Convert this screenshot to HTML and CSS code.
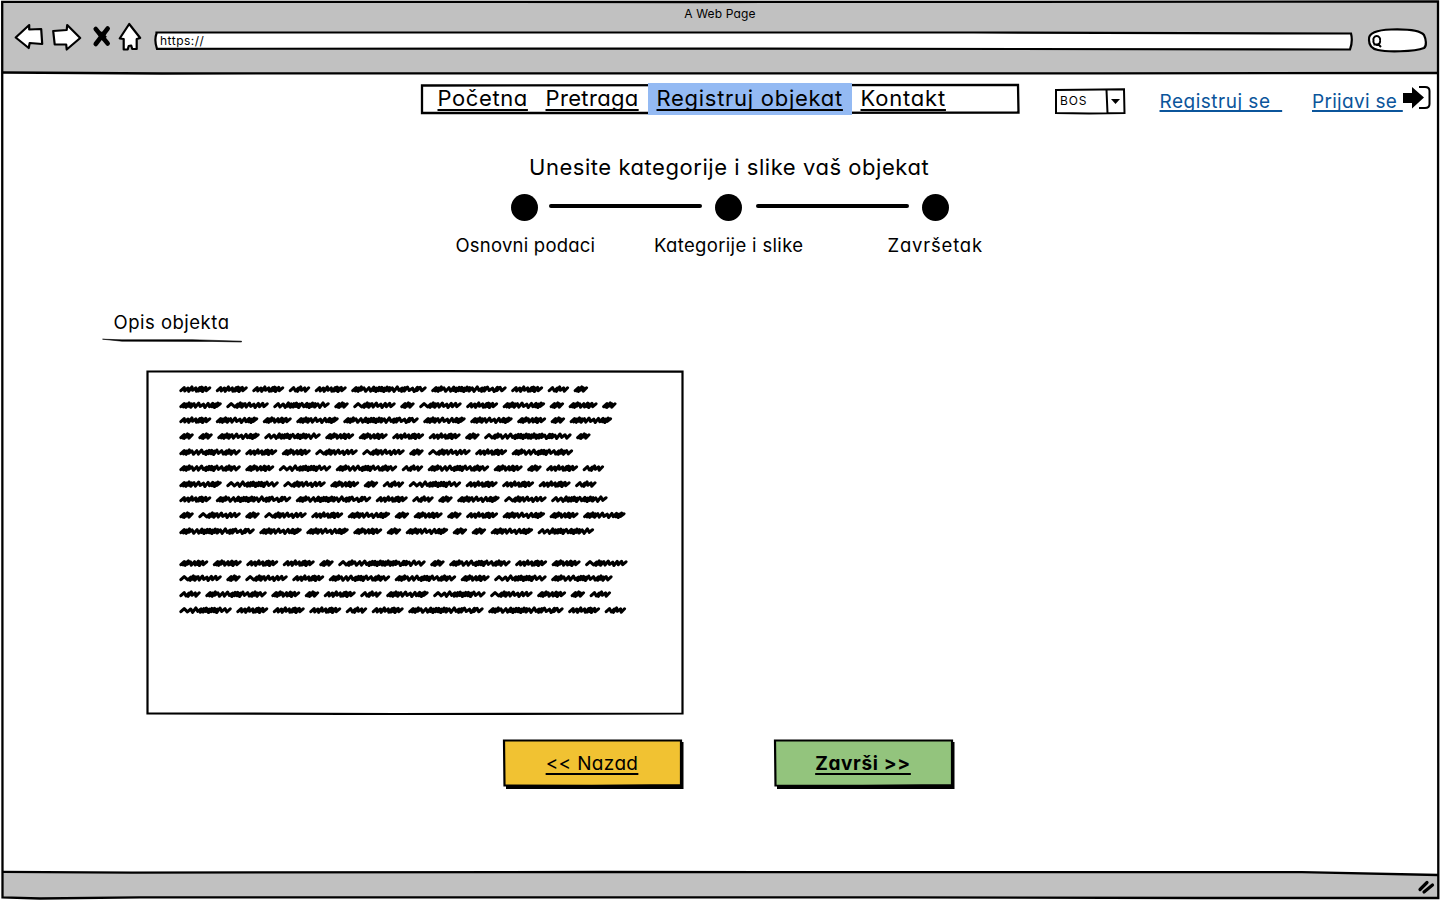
FILE: index.html
```html
<!DOCTYPE html>
<html lang="bs">
<head>
<meta charset="utf-8">
<title>A Web Page</title>
<link rel="stylesheet" href="styles.css">
</head>
<body>
<div class="window">
  <header class="chrome">
    <div class="window-title">A Web Page</div>
    <div class="toolbar">
      <svg class="tools" width="140" height="34" viewBox="0.8 0 140 34">
        <g fill="#fff" stroke="#000" stroke-width="2.2" stroke-linejoin="round">
          <path d="M16 4 2.500 16.500 15.500 27 16.500 22 29 23 28 8 16 8.500Z"/>
          <path d="M40 10 53.500 9 54 4 67 17 53.500 28.500 53 23.500 41.500 23.500Z"/>
          <path d="M116 3 127 17 123.500 18 123.500 28 119 28 118 24.500 115.500 25 114.500 28.500 110.500 28.500 110.500 18 106.500 17.500Z"/>
        </g>
        <path d="M82.500 8 94.500 22.500M94.500 7.500 82.500 23" fill="none" stroke="#000" stroke-width="4.500" stroke-linecap="round"/>
        <path d="M86 12 92 17.500M91 12 87 18" fill="none" stroke="#000" stroke-width="5"/>
      </svg>
      <div class="address">
        <svg class="sketch" width="1200" height="22" viewBox="0 0 1200 22"><path d="M2.500 3.500Q0 10 3 18.800L600 18.600 1196 19.500Q1199 11 1197 3.500L820 2.500 2.500 2.500Z" fill="#fff" stroke="#000" stroke-width="2.200"/></svg>
        <span class="url">https://</span>
      </div>
      <svg class="search" width="62" height="28" viewBox="0 0 62 28"><path d="M3 14C2 7 11 4 25 3.500C41 3 54 4 58 9C60 13 61 20 58 22C48 26 20 26 12 24C6 23 3 19 3 14Z" fill="#fff" stroke="#000" stroke-width="2.200"/><path d="M14 14.500A3.400 3.400 0 1 1 7.500 14.500A3.400 3.400 0 1 1 14 14.500M11.500 17.500 15 21M7.500 18.500H12" fill="none" stroke="#000" stroke-width="2"/></svg>
    </div>
  </header>
  <svg class="rule" width="1436" height="4" viewBox="0 0 1436 4"><path d="M0 1.500 160 2.500 500 2.300H1100L1436 2" fill="none" stroke="#000" stroke-width="2.300"/></svg>

  <div class="topbar">
    <nav class="menu">
      <svg class="sketch" width="600" height="32" viewBox="0 0 600 32"><path d="M2 2.500 300 2.200 598 2 598.500 29.500 300 30 2 30Z" fill="#fff" stroke="#000" stroke-width="2.300"/></svg>
      <a class="item home">Početna</a><a class="item find">Pretraga</a><a class="item active">Registruj objekat</a><a class="item contact">Kontakt</a>
    </nav>
    <div class="language">
      <svg class="sketch" width="72" height="28" viewBox="0 0 72 28"><path d="M2 3 70 2.200 70.500 26 35 26.500 2 26ZM52.500 3 53.500 26" fill="#fff" stroke="#000" stroke-width="2"/><path d="M57 12H66L61.500 17Z"/></svg>
      <span class="code">BOS</span>
    </div>
    <a class="link register">Registruj se&nbsp;&nbsp;</a>
    <a class="link login">Prijavi se&nbsp;</a>
    <svg class="enter" width="30" height="26" viewBox="0 0 30 26"><path d="M1 8H10V2L22 12.500 10 23.500V18H1Z"/><path d="M17 2H23Q27.500 2 27.500 6V19Q27.500 23 23 23H17" fill="none" stroke="#000" stroke-width="2"/></svg>
  </div>

  <main class="content">
    <h1 class="heading">Unesite kategorije i slike vaš objekat</h1>
    <div class="progress"><i class="dot"></i><i class="bar"></i><i class="dot"></i><i class="bar second"></i><i class="dot"></i></div>
    <div class="labels"><span class="label one">Osnovni podaci</span><span class="label two">Kategorije i slike</span><span class="label three">Završetak</span></div>
    <div class="tab"><span class="tab-text">Opis objekta</span>
      <svg class="tab-line" width="142" height="6" viewBox="0 0 142 6"><path d="M.5 1.200 20 1.800 90 1.700 139.500 3.200V4L110 3.400 20 3.200Z" stroke="#000" stroke-width=".6"/></svg>
    </div>
    <div class="description">
      <svg class="sketch" width="538" height="346" viewBox="0 0 538 346"><path d="M1.500 2.500 300 2.200 536.500 2.700 536.500 344.500 250 345 1.500 344.500Z" fill="#fff" stroke="#000" stroke-width="2.200"/></svg>
      <div class="lines" id="lines"></div>
    </div>
    <div class="actions">
      <a class="button back"><svg class="sketch" width="184" height="52" viewBox="0 0 184 52"><path d="M4 4H181.500V51H4Z"/><path d="M2 2.500 179 2.500V47L90 47.800 2.500 47.500Z" fill="#f1c232" stroke="#000" stroke-width="2.200"/></svg><span class="button-text">&lt;&lt; Nazad</span></a>
      <a class="button done"><svg class="sketch" width="184" height="52" viewBox="0 0 184 52"><path d="M4 4H181.500V51H4Z"/><path d="M2 2.500 179 2.500V47L90 47.800 2.500 47.500Z" fill="#93c47d" stroke="#000" stroke-width="2.200"/></svg><span class="button-text">Završi &gt;&gt;</span></a>
    </div>
  </main>

  <footer class="status"><svg width="1436" height="29" viewBox="0 0 1436 29"><path d="M0 2.500 130 3.500 1300 3 1436 6V29H0Z" fill="#c1c1c1"/><path d="M0 2.800 130 3.600 600 3 1300 3.200 1436 6" fill="none" stroke="#000" stroke-width="2.300"/><path d="M1418 20.500 1425 13.500M1422 23 1430.500 16" fill="none" stroke="#000" stroke-width="3.200" stroke-linecap="round"/></svg></footer>
  <svg class="frame" width="1440" height="900" viewBox="0 0 1440 900"><path d="M2.200 1.800 700 2 1438 1.500 1438.300 898 1200 898 900 897.300 140 897.300 40 898.500 2.500 897.500Z" fill="none" stroke="#000" stroke-width="2.300"/></svg>
</div>
<script src="scribble.js"></script>
</body>
</html>
```

FILE: styles.css
```css
* { box-sizing: border-box; }
body { margin: 0; background: #fff; color: #000; font-family: Inter, "Open Sans", sans-serif; font-feature-settings: "cv11" 1, "calt" 0; overflow: hidden; }
svg { display: block; flex: none; }
.window { position: relative; width: 1440px; height: 900px; display: flex; flex-direction: column; padding: 2px; }
.frame { position: absolute; left: 0; top: 0; pointer-events: none; }
.sketch { position: absolute; left: 0; top: 0; }
.chrome { height: 69px; background: #c1c1c1; }
.window-title { height: 22px; line-height: 23px; text-align: center; font-size: 12px; letter-spacing: .15px; }
.toolbar { display: flex; align-items: flex-start; padding-left: 12px; }
.tools { margin-top: -3px; }
.address { position: relative; width: 1200px; height: 22px; margin: 6px 0 0 0; }
.url { position: absolute; left: 6px; top: 1px; font-size: 12px; line-height: 19px; letter-spacing: .5px; }
.search { margin: 2px 0 0 12px; }
.rule { background: linear-gradient(#c1c1c1 50%, #fff 50%); }
.topbar { display: flex; height: 46px; padding: 8px 0 0 418px; }
.menu { position: relative; display: flex; width: 600px; height: 32px; }
.item { position: relative; height: 32px; font-size: 22px; line-height: 31px; padding-left: 8.500px; white-space: nowrap; text-decoration: underline; text-decoration-thickness: 1.500px; text-underline-offset: 3px; text-decoration-skip-ink: none; }
.home { margin-left: 9px; width: 108px; letter-spacing: .6px; }
.find { width: 111px; letter-spacing: .35px; }
.active { width: 204px; background: #94baf3; letter-spacing: .72px; }
.contact { letter-spacing: .8px; }
.language { position: relative; width: 72px; height: 28px; margin: 4px 0 0 34px; }
.code { position: absolute; left: 6px; top: 5px; font-size: 12px; line-height: 17px; letter-spacing: .9px; }
.link { font-size: 19px; line-height: 26px; color: #0b559b; white-space: nowrap; padding-top: 6px; text-decoration: underline; text-decoration-thickness: 1.500px; text-underline-offset: 2px; text-decoration-skip-ink: none; }
.register { margin-left: 33.500px; width: 152.500px; letter-spacing: .5px; }
.login { width: 90px; letter-spacing: .3px; }
.enter { margin-top: 2px; }
.content { height: 750px; display: flex; flex-direction: column; }
.heading { margin: 32px 0 0 527px; font-size: 22px; line-height: 28px; font-weight: 400; white-space: nowrap; letter-spacing: .54px; }
.progress { display: flex; align-items: center; width: 440px; height: 28px; margin: 13px 0 0 509px; }
.dot { width: 27px; height: 27px; border-radius: 50%; background: #000; }
.bar { width: 153px; height: 4px; border-radius: 2px; background: #000; margin: -3px 13px 0 11px; }
.second { margin-left: 14px; }
.labels { display: flex; margin: 10px 0 0 453.500px; height: 26px; line-height: 26px; font-size: 18.500px; white-space: nowrap; }
.one { width: 198.500px; letter-spacing: .22px; }
.two { width: 233.500px; letter-spacing: .34px; }
.three { letter-spacing: .8px; }
.tab { margin: 51px 0 0 100px; width: 142px; height: 34px; }
.tab-text { display: block; padding-left: 11.500px; height: 29px; line-height: 26px; font-size: 18.500px; white-space: nowrap; letter-spacing: .5px; }
.description { position: relative; width: 538px; height: 346px; margin: 26px 0 0 144px; }
.lines { position: relative; padding: 12px 0 0 33px; }
.scribble { height: 15.800px; }
.actions { display: flex; gap: 87px; margin: 23px 0 0 500px; }
.button { position: relative; width: 184px; height: 52px; text-align: center; font-size: 19px; line-height: 51px; letter-spacing: .35px; }
.button-text { position: relative; left: -2px; white-space: nowrap; text-decoration: underline; text-decoration-thickness: 1.500px; text-underline-offset: 3px; text-decoration-skip-ink: none; }
.done { font-weight: 700; letter-spacing: .65px; }
.status { height: 29px; margin-top: -1px; }
```

FILE: scribble.js
```js
// Each word shape: total width and the horizontal step of each successive stroke.
const L = 3.6, D = 1.9;
const words = {
  a: [14, [D, D, D, L]],
  b: [21, [L + 1, D, L, L]],
  c: [28.5, [D, D, D, L, L, D, D, L]],
  d: [31.5, [L, L, L, L, D, D, D, L]],
  e: [42, [D, D, D, D, L, L, L, L, D, D, D]],
  f: [42, [L + 2, D, D, D, L, L, L, L, L]],
  g: [52, [L + 1, L, L, D, D, D, D, D, D, D, L, L]],
  h: [56, [L, L, D, D, D, D, D, L, D, D, D, D, L, L]],
  i: [61, [D, D, D, L, L, L, D, D, D, D, L, L, D, D, D, L]],
  j: [75, [D, D, D, L, L, D, D, D, D, D, D, D, L, L, D, D, L, L, D, L]],
  k: [87, [L + 1, D, D, L, L, L, D, D, D, D, D, D, D, D, D, D, D, L, D, D, L, L, L]]
};
const rows = ["dddbdjjdba", "efhafafdeaca", "decejeecae", "aaehccddaka", "idcffafdi", "icgibicadb",
  "egfcabgdddb", "djjdbaefh", "afafdeacadece", "jeecaeaaeh", "", "ccddakaidcf", "fafdiicgi", "bicadbegfcab", "gdddbdjjdb"];

function wordPath(start, key) {
  const [width, steps] = words[key];
  const total = steps.reduce((s, n) => s + n, 0);
  const scale = (width - 6) / total;
  let x = start + 1.9;
  let path = `M${x} 9.600`;
  steps.forEach((step, n) => {
    const wave = Math.sin(n * 2.3) * 0.6;
    path += `L${x + 3.3} ${6.6 + wave}`;
    x += step * scale;
    path += `L${x} ${9.9 + wave}`;
  });
  return path + `L${x + 3.3} 6.800`;
}

document.getElementById("lines").innerHTML = rows.map(row => {
  let x = 0, path = "";
  for (const key of row) {
    path += wordPath(x, key);
    x += words[key][0] + 4.98;
  }
  return `<div class="scribble"><svg width="460" height="16" viewBox="0 0 460 16"><path d="${path}" fill="none" stroke="#000" stroke-width="3.100" stroke-linejoin="round" stroke-linecap="round"/></svg></div>`;
}).join("");
```
